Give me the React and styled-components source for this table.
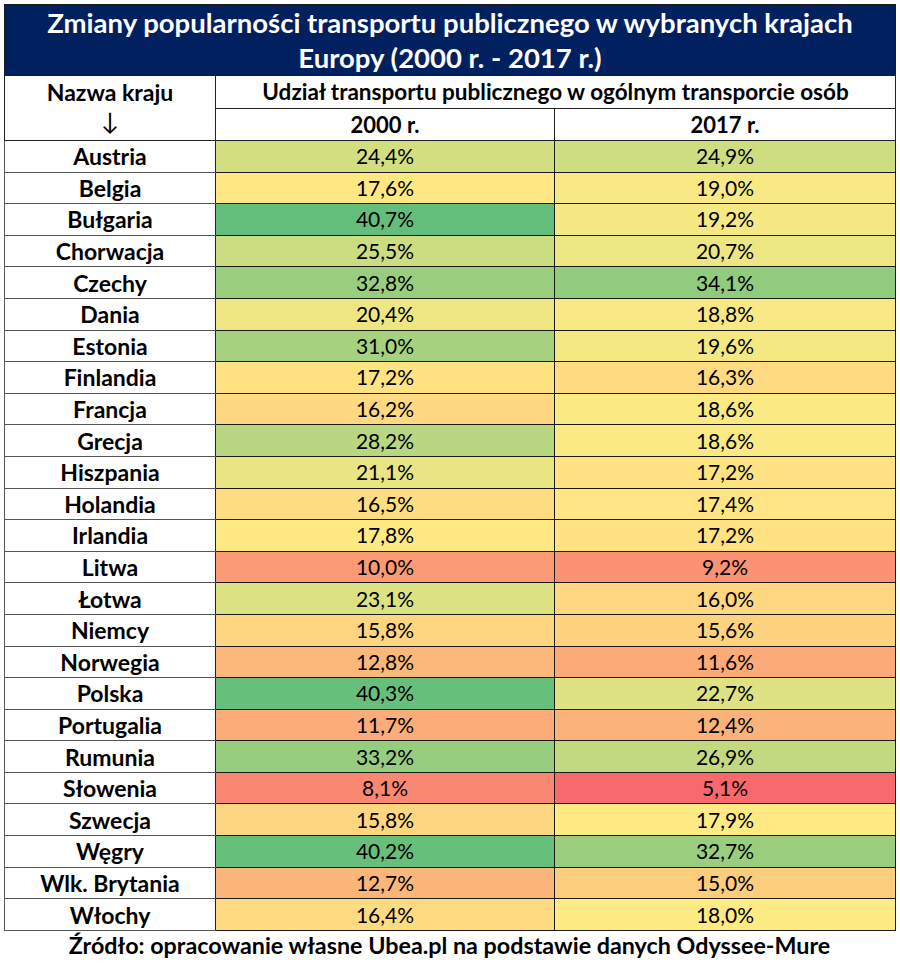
import React from 'react';
import styled, { createGlobalStyle } from 'styled-components';

const GlobalStyle = createGlobalStyle`
  html, body { margin: 0; padding: 0; background: #fff; }
  body { font-family: Lato, "Open Sans", sans-serif; color: #000; }
`;

const rows = [
  ['Austria', 24.4, 24.9],
  ['Belgia', 17.6, 19.0],
  ['Bułgaria', 40.7, 19.2],
  ['Chorwacja', 25.5, 20.7],
  ['Czechy', 32.8, 34.1],
  ['Dania', 20.4, 18.8],
  ['Estonia', 31.0, 19.6],
  ['Finlandia', 17.2, 16.3],
  ['Francja', 16.2, 18.6],
  ['Grecja', 28.2, 18.6],
  ['Hiszpania', 21.1, 17.2],
  ['Holandia', 16.5, 17.4],
  ['Irlandia', 17.8, 17.2],
  ['Litwa', 10.0, 9.2],
  ['Łotwa', 23.1, 16.0],
  ['Niemcy', 15.8, 15.6],
  ['Norwegia', 12.8, 11.6],
  ['Polska', 40.3, 22.7],
  ['Portugalia', 11.7, 12.4],
  ['Rumunia', 33.2, 26.9],
  ['Słowenia', 8.1, 5.1],
  ['Szwecja', 15.8, 17.9],
  ['Węgry', 40.2, 32.7],
  ['Wlk. Brytania', 12.7, 15.0],
  ['Włochy', 16.4, 18.0],
];

// excel style 3-colour scale over both columns
const MIN = 5.1, MID = 17.95, MAX = 40.7;
const RED = [248, 105, 107], YEL = [255, 235, 132], GRN = [99, 190, 123];

function mix(a, b, t) {
  return a.map((v, i) => Math.round(v + (b[i] - v) * t));
}

function scale(v) {
  const c = v <= MID ? mix(RED, YEL, (v - MIN) / (MID - MIN)) : mix(YEL, GRN, (v - MID) / (MAX - MID));
  return `rgb(${c.join(',')})`;
}

const fmt = (v) => v.toFixed(1).replace('.', ',') + '%';

const Page = styled.div`
  padding: 4px 5px 0 4px;
  width: 891px;
`;

const Table = styled.table`
  width: 891px;
  border-collapse: collapse;
  table-layout: fixed;
`;

const TitleCell = styled.th`
  background: #002060;
  color: #fff;
  font-size: 27.5px;
  font-weight: 700;
  line-height: 35px;
  height: 70px;
  padding: 0;
  border: 1px solid #1a1a1a;
`;

const HeadCell = styled.th`
  background: #fff;
  font-size: ${(p) => p.fs || 22.5}px;
  font-weight: 700;
  height: ${(p) => p.h || 31}px;
  padding: 0;
  line-height: 24px;
  border: 1px solid #222;
  vertical-align: ${(p) => p.top ? 'top' : 'middle'};
  padding-top: ${(p) => p.top ? '4px' : '0'};
`;

const Arrow = styled.div`
  font-size: 24px;
  font-weight: 400;
  line-height: 34px;
`;

const Name = styled.td`
  font-size: 23px;
  font-weight: 700;
  text-align: center;
  height: 30.6px;
  line-height: 26px;
  padding: 0;
  border: 1px solid #555;
  border-right-color: #222;
  background: #fff;
`;

const Value = styled.td`
  font-size: 21px;
  line-height: 26px;
  text-align: center;
  padding: 0;
  border: 1px solid #1a1a1a;
  background: ${(p) => p.bg};
`;

const Source = styled.div`
  text-align: center;
  font-size: 23.3px;
  font-weight: 700;
  padding-top: 0;
`;

export default function App() {
  return (
    <Page>
      <GlobalStyle />
      <Table>
        <colgroup>
          <col style={{ width: 211 }} />
          <col style={{ width: 339 }} />
          <col style={{ width: 341 }} />
        </colgroup>
        <thead>
          <tr>
            <TitleCell colSpan={3}>
              Zmiany popularności transportu publicznego w wybranych krajach
              <br />
              Europy (2000 r. - 2017 r.)
            </TitleCell>
          </tr>
          <tr>
            <HeadCell rowSpan={2} top fs={23}>
              Nazwa kraju
              <Arrow>↓</Arrow>
            </HeadCell>
            <HeadCell colSpan={2} h={32}>Udział transportu publicznego w ogólnym transporcie osób</HeadCell>
          </tr>
          <tr>
            <HeadCell h={31} fs={22}>2000 r.</HeadCell>
            <HeadCell h={31} fs={22}>2017 r.</HeadCell>
          </tr>
        </thead>
        <tbody>
          {rows.map(([name, a, b]) => (
            <tr key={name}>
              <Name>{name}</Name>
              <Value bg={scale(a)}>{fmt(a)}</Value>
              <Value bg={scale(b)}>{fmt(b)}</Value>
            </tr>
          ))}
        </tbody>
      </Table>
      <Source>Źródło: opracowanie własne Ubea.pl na podstawie danych Odyssee-Mure</Source>
    </Page>
  );
}
